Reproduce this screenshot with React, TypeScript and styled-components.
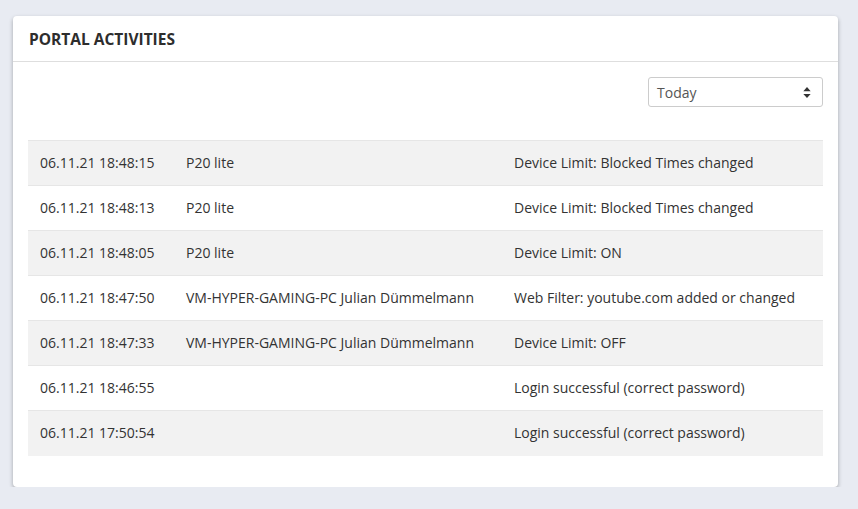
import React from 'react'
import styled, { createGlobalStyle } from 'styled-components'

const GlobalStyle = createGlobalStyle`
  html, body {
    margin: 0;
    padding: 0;
    background: #e8ebf2;
    font-family: 'Open Sans', 'Noto Sans', sans-serif;
    color: #333;
  }
`

const rows = [
  { time: '06.11.21 18:48:15', device: 'P20 lite', action: 'Device Limit: Blocked Times changed' },
  { time: '06.11.21 18:48:13', device: 'P20 lite', action: 'Device Limit: Blocked Times changed' },
  { time: '06.11.21 18:48:05', device: 'P20 lite', action: 'Device Limit: ON' },
  { time: '06.11.21 18:47:50', device: 'VM-HYPER-GAMING-PC Julian Dümmelmann', action: 'Web Filter: youtube.com added or changed' },
  { time: '06.11.21 18:47:33', device: 'VM-HYPER-GAMING-PC Julian Dümmelmann', action: 'Device Limit: OFF' },
  { time: '06.11.21 18:46:55', device: '', action: 'Login successful (correct password)' },
  { time: '06.11.21 17:50:54', device: '', action: 'Login successful (correct password)' },
]

export default function App() {
  return (
    <>
      <GlobalStyle />
      <Page>
        <Card>
          <CardHeader>
            <Title>Portal Activities</Title>
          </CardHeader>
          <CardBody>
            <Toolbar>
              <SelectBox>
                <span>Today</span>
                <Caret viewBox="0 0 8 12" aria-hidden>
                  <path d="M4 0 L8 4.5 H0 Z M4 12 L0 7.5 H8 Z" fill="#333" />
                </Caret>
              </SelectBox>
            </Toolbar>
            <Table>
              <colgroup>
                <col style={{ width: 146 }} />
                <col style={{ width: 328 }} />
                <col />
              </colgroup>
              <tbody>
                {rows.map((r, i) => (
                  <Row key={i} striped={i % 2 === 0}>
                    <Cell>{r.time}</Cell>
                    <Cell>{r.device}</Cell>
                    <Cell>{r.action}</Cell>
                  </Row>
                ))}
              </tbody>
            </Table>
          </CardBody>
        </Card>
      </Page>
    </>
  )
}

const Page = styled.div`
  padding: 16px 20px 0 13px;
`

const Card = styled.div`
  width: 825px;
  background: #fff;
  border-radius: 4px;
  box-shadow: 0 2px 4px rgba(0, 0, 0, 0.3);
`

const CardHeader = styled.div`
  height: 45px;
  display: flex;
  align-items: center;
  padding: 0 16px;
  border-bottom: 1px solid #dedede;
`

const Title = styled.h2`
  margin: 0;
  font-size: 15.5px;
  font-weight: 700;
  text-transform: uppercase;
  color: #2d2d2d;
`

const CardBody = styled.div`
  padding: 15px 15px 31px;
`

const Toolbar = styled.div`
  display: flex;
  justify-content: flex-end;
  margin-bottom: 33px;
`

const SelectBox = styled.div`
  width: 175px;
  height: 30px;
  box-sizing: border-box;
  border: 1px solid #ccc;
  border-radius: 3px;
  display: flex;
  align-items: center;
  justify-content: space-between;
  padding: 0 11px 0 8px;
  font-size: 14px;
  color: #555;
`

const Caret = styled.svg`
  width: 8px;
  height: 11px;
`

const Table = styled.table`
  width: 100%;
  table-layout: fixed;
  border-collapse: collapse;
  font-size: 14px;
  color: #333;
`

const Row = styled.tr<{ striped: boolean }>`
  background: ${p => (p.striped ? '#f2f2f2' : '#fff')};
`

const Cell = styled.td`
  height: 45px;
  box-sizing: border-box;
  padding: 0 12px 2px;
  border-top: 1px solid #e6e6e6;
  white-space: nowrap;
  vertical-align: middle;
`
